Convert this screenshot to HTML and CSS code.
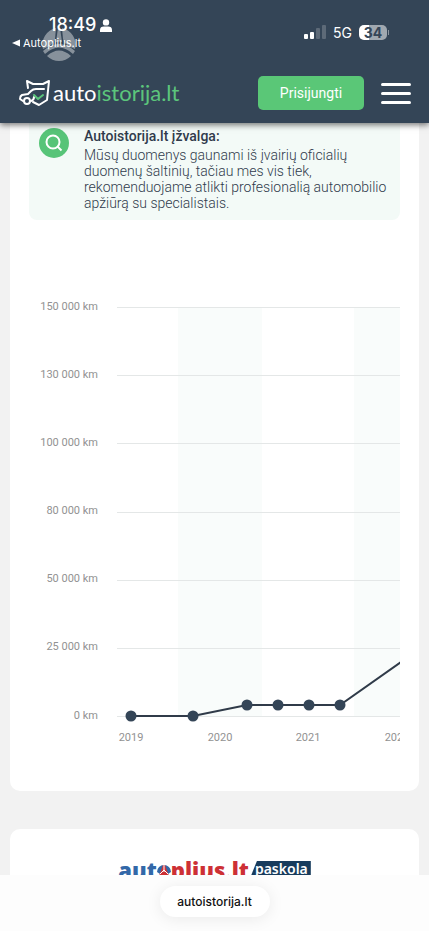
FILE: index.html
```html
<!DOCTYPE html>
<html lang="lt">
<head>
<meta charset="utf-8">
<meta name="viewport" content="width=device-width, initial-scale=1">
<title>Autoistorija.lt</title>
<link rel="stylesheet" href="styles.css">
</head>
<body>
<header class="header">
  <div class="status">
    <svg class="emblem" width="36" height="36" viewBox="0 0 36 36" aria-hidden="true">
      <path d="M15 1 14 12Q13 18 2 22A17 17 0 0 1 15 1ZM21 1 22 12Q23 18 34 22A17 17 0 0 0 21 1ZM17 1h2l2 14q-3-1-6 0ZM2 24Q18 10 34 24L32 27Q18 14 4 27ZM6 29Q18 18 30 29A17 17 0 0 1 6 29Z"/>
    </svg>
    <div class="status-left">
      <div class="clock">18:49
        <svg width="12" height="13" viewBox="0 0 12 13" aria-hidden="true"><circle cx="6" cy="3.4" r="3.2"/><path d="M0 13V11Q0 7.600 4 7.600H8Q12 7.600 12 11V13Z"/></svg>
      </div>
      <a class="back" href="#"><svg width="8" height="8" viewBox="0 0 8 8" aria-hidden="true"><path d="M0 4 8 .5V7.500Z"/></svg>Autoplius.lt</a>
    </div>
    <div class="status-right">
      <svg width="22" height="14" viewBox="0 0 22 14" aria-hidden="true"><rect y="9" width="4" height="5" rx="1"/><rect x="6" y="7" width="4" height="7" rx="1"/><rect class="dim" x="12" y="3" width="4" height="11" rx="1"/><rect class="dim" x="18" width="4" height="14" rx="1"/></svg>
      <span class="network">5G</span>
      <span class="battery">34</span>
    </div>
  </div>
  <nav class="nav">
    <a class="logo" href="#">
      <svg width="32" height="28" viewBox="0 0 32 28" fill="none" stroke="#fff" stroke-width="2" stroke-linejoin="round" stroke-linecap="round" aria-hidden="true">
        <path d="M9 9 8 2 14 5H24L30 2 28 21 20 26 14 23"/>
        <path d="M25 10H17Q14 10 12 12L9 15 3 16Q1 17 1 20L4 22M12 22Q15 21 15 18"/>
        <circle cx="8" cy="22" r="3"/>
        <path class="tick" d="M15 16 19 20 24 16"/>
      </svg>
      <span>auto<b>istorija.lt</b></span>
    </a>
    <button class="login" type="button">Prisijungti</button>
    <button class="menu" type="button" aria-label="Meniu"><i></i><i></i><i></i></button>
  </nav>
</header>
<main class="page">
  <section class="card report">
    <div class="insight">
      <svg width="30" height="30" viewBox="0 0 30 30" fill="none" aria-hidden="true"><circle cx="15" cy="15" r="15" fill="#57c478"/><circle cx="14" cy="14" r="6.500" stroke="#fff" stroke-width="2"/><path d="m18.500 18.500 4 4" stroke="#fff" stroke-width="2"/></svg>
      <div>
        <h2>Autoistorija.lt įžvalga:</h2>
        <p>Mūsų duomenys gaunami iš įvairių oficialių duomenų šaltinių, tačiau mes vis tiek, rekomenduojame atlikti profesionalią automobilio apžiūrą su specialistais.</p>
      </div>
    </div>
    <div class="chart">
      <svg width="460" height="460" viewBox="0 0 460 460" role="img" aria-label="Rida pagal metus">
        <path class="band" d="M149 17H233V426H149ZM325 17H410V426H325Z"/>
        <path class="grid" d="M88 17.500H460M88 85.500H460M88 153.500H460M88 222.500H460M88 290.500H460M88 358.500H460M88 426.500H460"/>
        <g class="labels" text-anchor="end">
          <text x="69" y="20">150 000 km</text><text x="69" y="88">130 000 km</text><text x="69" y="156">100 000 km</text><text x="69" y="224">80 000 km</text><text x="69" y="292">50 000 km</text><text x="69" y="360">25 000 km</text><text x="69" y="429">0 km</text>
        </g>
        <g class="labels" text-anchor="middle">
          <text x="102" y="451">2019</text><text x="191" y="451">2020</text><text x="279" y="451">2021</text><text x="368" y="451">2022</text>
        </g>
        <polyline class="line" points="102,426 164,426 218,415 249,415 280,415 311,415 372,372"/>
        <g class="dots"><circle cx="102" cy="426" r="5.500"/><circle cx="164" cy="426" r="5.500"/><circle cx="218" cy="415" r="5.500"/><circle cx="249" cy="415" r="5.500"/><circle cx="280" cy="415" r="5.500"/><circle cx="311" cy="415" r="5.500"/></g>
      </svg>
    </div>
  </section>
  <section class="card partner">
    <a class="loan" href="#">
      <span class="brand"><span>aut</span><svg width="14" height="14" viewBox="0 0 14 14" aria-hidden="true"><path d="M0 9A7 7 0 0 1 14 9L11 11 7 5 3 11Z" fill="#3268a8"/><path d="M6 2H8L12 13H2Z" fill="#cd3035"/><path d="M7 1V9M3 11 7 7 11 11" stroke="#fff" fill="none"/></svg>plius.lt</span><span class="tag">paskola</span>
    </a>
  </section>
</main>
<footer class="browser"><button class="address" type="button">autoistorija.lt</button></footer>
</body>
</html>
```
FILE: styles.css
```css
* { box-sizing: border-box; }
body {
  margin: 0;
  height: 100vh;
  display: flex;
  flex-direction: column;
  overflow: hidden;
  background: #f2f2f2;
  font-family: Roboto, sans-serif;
}
a { color: inherit; text-decoration: none; }
button { border: 0; padding: 0; font: inherit; }
svg { flex: none; }
.header {
  position: relative;
  z-index: 1;
  flex: none;
  background: #344557;
  color: #fff;
  box-shadow: 0 2px 6px #0008;
}
.status {
  position: relative;
  display: flex;
  justify-content: space-between;
  padding: 15px 42px 0 12px;
  height: 64px;
  font-family: Inter, sans-serif;
  fill: #fff;
}
.emblem { position: absolute; left: 41px; top: 27px; fill: #87919b; }
.status-left { position: relative; }
.clock {
  display: flex;
  align-items: center;
  gap: 4px;
  padding-left: 37px;
  font-size: 18px;
  line-height: 20px;
  font-weight: 500;
}
.back { display: flex; align-items: center; gap: 3px; font-size: 11px; line-height: 16px; }
.status-right { display: flex; align-items: center; gap: 7px; height: 34px; }
.dim { fill: #5d6a78; }
.network { font-size: 14px; }
.battery {
  position: relative;
  width: 28px;
  border-radius: 5px;
  background: linear-gradient(90deg, #fff 34%, #a0a8b0 34%);
  color: #344557;
  font-size: 14px;
  line-height: 15px;
  font-weight: 700;
  text-align: center;
}
.battery::after {
  content: "";
  position: absolute;
  right: -2px;
  top: 5px;
  width: 1px;
  height: 5px;
  background: #8b949e;
}
.nav { display: flex; align-items: center; padding: 12px 18px 13px 19px; }
.logo { display: flex; align-items: center; gap: 2px; margin-right: auto; font-family: Lato, sans-serif; font-size: 22px; line-height: 28px; }
.logo b { font-weight: 400; color: #5cc57c; }
.tick { stroke: #5cc57c; }
.login { width: 106px; height: 34px; border-radius: 5px; background: #5ac777; color: #fff; font-size: 14px; }
.menu { display: grid; gap: 6px; width: 30px; margin-left: 17px; background: none; }
.menu i { height: 3px; border-radius: 2px; background: #fff; }
.page { flex: 1; min-height: 0; overflow: hidden; padding: 0 10px; }
.card { background: #fff; border-radius: 10px; }
.report { padding: 0 19px 41px; border-top-left-radius: 0; border-top-right-radius: 0; margin-bottom: 38px; }
.insight {
  display: flex;
  gap: 15px;
  padding: 5px 10px 9px;
  border-radius: 0 0 8px 8px;
  background: #f3faf7;
  color: #303b4c;
}
.insight h2 { margin: 0 0 3px; font-size: 14px; line-height: 16px; font-weight: 500; }
.insight p { margin: 0; font-size: 14px; line-height: 16px; font-weight: 300; }
.chart { margin-top: 70px; overflow: hidden; }
.chart svg { display: block; }
.band { fill: #f9fcfb; }
.grid { stroke: #e4e7e7; }
.labels { fill: #929292; font-size: 11px; }
.line { fill: none; stroke: #303b49; stroke-width: 2; }
.dots { fill: #344557; }
.partner { height: 150px; padding-top: 32px; }
.loan { display: flex; justify-content: center; align-items: flex-start; }
.brand { display: flex; align-items: center; color: #cd3035; font-family: "Open Sans", sans-serif; font-size: 22px; line-height: 18px; font-weight: 800; }
.brand span { color: #3268a8; }
.tag {
  padding: 0 3px 4px 6px;
  background: #173b5c;
  clip-path: polygon(8px 0, 100% 0, 100% 100%, 0 100%);
  color: #fff;
  font-family: "Noto Sans", sans-serif;
  font-size: 14px;
  line-height: 16px;
  font-weight: 600;
}
.browser { flex: none; display: flex; justify-content: center; padding: 11px 0 14px; background: #fdfdfd; position: relative; }
.address {
  width: 110px;
  height: 31px;
  border-radius: 16px;
  background: #fff;
  box-shadow: 0 2px 16px #00000014;
  color: #111;
  font-family: Inter, sans-serif;
  font-size: 12px;
  font-weight: 500;
}
```
